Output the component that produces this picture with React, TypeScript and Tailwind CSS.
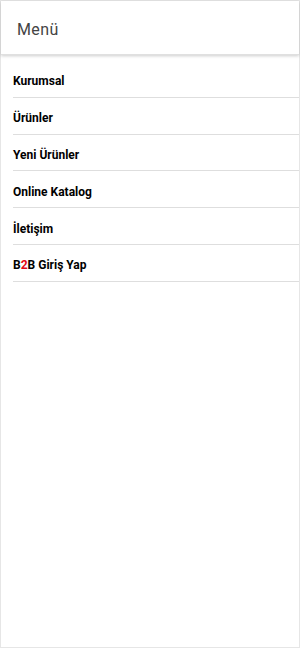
import React from "react";

const items = ["Kurumsal", "Ürünler", "Yeni Ürünler", "Online Katalog", "İletişim"];

export default function App() {
  return (
    <div className="w-[300px] h-[648px] bg-white border border-[#e6e6e6] flex flex-col" style={{ fontFamily: "Roboto, 'Noto Sans', sans-serif" }}>
      <div className="h-[54px] flex items-center pl-[16px] pt-[4px] text-[16px] text-[#444] shadow-[0_1px_3px_rgba(0,0,0,0.2)] border-b border-[#e0e0e0] tracking-[0.4px]">
        Menü
      </div>
      <ul className="pl-[12px] pt-[6px]">
        {items.map((t) => (
          <li key={t} className="h-[36.8px] flex items-center pt-[5px] border-b border-[#dedede] text-[12px] font-bold text-black">
            {t}
          </li>
        ))}
        <li className="h-[36.8px] flex items-center pt-[5px] border-b border-[#dedede] text-[12px] font-bold text-black">
          B<span className="text-[#e30613]">2</span>B Giriş Yap
        </li>
      </ul>
    </div>
  );
}
